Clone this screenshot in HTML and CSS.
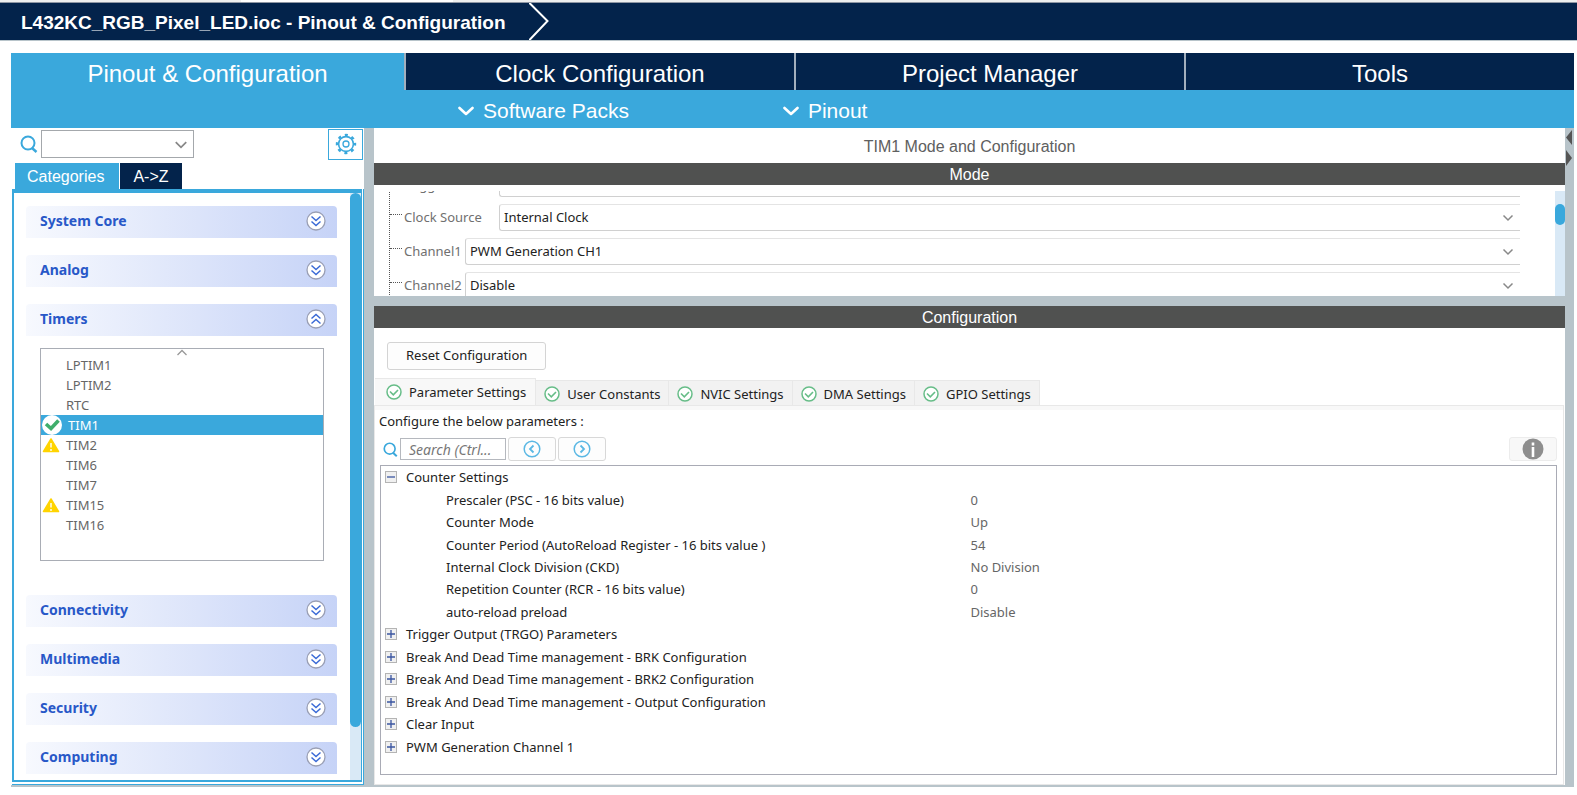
FILE: index.html
```html
<!DOCTYPE html>
<html lang="en">
<head>
<meta charset="utf-8">
<title>L432KC_RGB_Pixel_LED.ioc - Pinout &amp; Configuration</title>
<link rel="stylesheet" href="styles.css">
</head>
<body>
<svg class="defs" aria-hidden="true">
  <symbol id="chev" viewBox="0 0 12 8"><path d="M1.5 1.5 6 6l4.500-4.500" fill="none" stroke="currentColor" stroke-width="1.500"/></symbol>
  <symbol id="menu" viewBox="0 0 16 10"><path d="M1.500 2 8 8l6.500-6" fill="none" stroke="#fff" stroke-width="2.600" stroke-linecap="round" stroke-linejoin="round"/></symbol>
  <symbol id="search" viewBox="0 0 18 18"><circle cx="8" cy="8" r="6.500" fill="none" stroke="#3aa8dc" stroke-width="2"/><path d="M12 13l4.500 4" fill="none" stroke="#3aa8dc" stroke-width="2.500"/></symbol>
  <symbol id="down" viewBox="0 0 20 20"><circle cx="10" cy="10" r="9" fill="#fff" stroke="#9a9fb4" stroke-width="1.300"/><path d="M5.500 5.500 10 9.500l4.500-4M5.500 10.500 10 14.500l4.500-4" fill="none" stroke="#3a6ad6" stroke-width="1.500"/></symbol>
  <symbol id="up" viewBox="0 0 20 20"><circle cx="10" cy="10" r="9" fill="#fff" stroke="#9a9fb4" stroke-width="1.300"/><path d="M5.500 9.500 10 5.500l4.500 4M5.500 14.500 10 10.500l4.500 4" fill="none" stroke="#3a6ad6" stroke-width="1.500"/></symbol>
  <symbol id="ok" viewBox="0 0 16 16"><circle cx="8" cy="8" r="7" fill="#fff" stroke="#67bd88" stroke-width="1.500"/><path d="M4 7.500 7.300 10.800 12 6" fill="none" stroke="#67bd88" stroke-width="1.600"/></symbol>
  <symbol id="warn" viewBox="0 0 18 16"><path d="M9 2 16.500 14.500h-15z" fill="#ffd400" stroke="#ffd400" stroke-width="1.500" stroke-linejoin="round"/><path d="M9 6v4.500M9 12v2" stroke="#fff" stroke-width="1.400"/></symbol>
  <symbol id="plus" viewBox="0 0 12 12"><rect x=".5" y=".5" width="11" height="11" fill="#f0f0f0" stroke="#b4b4b4"/><path d="M2 6h8M6 2v8" stroke="#3a55a0" stroke-width="1.300"/></symbol>
  <symbol id="minus" viewBox="0 0 12 12"><rect x=".5" y=".5" width="11" height="11" fill="#f0f0f0" stroke="#b4b4b4"/><path d="M2 6h8" stroke="#3a55a0" stroke-width="1.300"/></symbol>
</svg>

<div class="strip"></div>
<header class="crumb">
  <h1>L432KC_RGB_Pixel_LED.ioc - Pinout &amp; Configuration</h1>
  <svg class="crumb-arrow" viewBox="0 0 20 37"><path d="M0-.5 18.500 18 0 37.500" fill="none" stroke="#fff" stroke-width="2"/></svg>
</header>

<div class="app">
  <nav class="tabs">
    <button class="tab active">Pinout &amp; Configuration</button>
    <button class="tab">Clock Configuration</button>
    <button class="tab">Project Manager</button>
    <button class="tab">Tools</button>
  </nav>
  <div class="menus">
    <button class="menu"><svg width="16" height="10"><use href="#menu"/></svg>Software Packs</button>
    <button class="menu"><svg width="16" height="10"><use href="#menu"/></svg>Pinout</button>
  </div>

  <div class="work">
    <aside class="side">
      <div class="find">
        <svg width="18" height="18"><use href="#search"/></svg>
        <span class="combo"><select aria-label="Search peripherals"><option></option></select><svg width="14" height="10"><use href="#chev"/></svg></span>
        <button class="gear" aria-label="Settings"><svg width="22" height="22" viewBox="0 0 22 22" fill="none" stroke="#3aa8dc"><circle cx="11" cy="11" r="9" stroke-width="2.400" stroke-dasharray="3.070 4" stroke-dashoffset="1.500"/><circle cx="11" cy="11" r="7.400" stroke-width="1.600"/><circle cx="11" cy="11" r="3" stroke-width="1.300"/></svg></button>
      </div>
      <div class="side-tabs">
        <button class="side-tab active">Categories</button>
        <button class="side-tab">A-&gt;Z</button>
      </div>
      <div class="frame">
        <div class="panel">
          <div class="cats">
            <button class="cat">System Core<svg width="20" height="20"><use href="#down"/></svg></button>
            <button class="cat">Analog<svg width="20" height="20"><use href="#down"/></svg></button>
            <button class="cat">Timers<svg width="20" height="20"><use href="#up"/></svg></button>
            <div class="list">
              <svg class="list-up" width="12" height="8" viewBox="0 0 12 8"><path d="M1.500 6 6 1.500 10.500 6" fill="none" stroke="#999" stroke-width="1.300"/></svg>
              <ul>
                <li><button><i></i>LPTIM1</button></li>
                <li><button><i></i>LPTIM2</button></li>
                <li><button><i></i>RTC</button></li>
                <li><button class="sel"><i><svg width="22" height="20" viewBox="0 0 22 20"><circle cx="11" cy="10" r="10" fill="#fff"/><path d="M5 9 10 13.500 17.500 5.500" fill="none" stroke="#3fae6b" stroke-width="3.600"/></svg></i>TIM1</button></li>
                <li><button><i><svg width="18" height="16"><use href="#warn"/></svg></i>TIM2</button></li>
                <li><button><i></i>TIM6</button></li>
                <li><button><i></i>TIM7</button></li>
                <li><button><i><svg width="18" height="16"><use href="#warn"/></svg></i>TIM15</button></li>
                <li><button><i></i>TIM16</button></li>
              </ul>
            </div>
            <button class="cat">Connectivity<svg width="20" height="20"><use href="#down"/></svg></button>
            <button class="cat">Multimedia<svg width="20" height="20"><use href="#down"/></svg></button>
            <button class="cat">Security<svg width="20" height="20"><use href="#down"/></svg></button>
            <button class="cat">Computing<svg width="20" height="20"><use href="#down"/></svg></button>
          </div>
          <div class="scroll"><div class="thumb"></div></div>
        </div>
      </div>
    </aside>

    <main class="main">
      <h2 class="title">TIM1 Mode and Configuration</h2>
      <h3 class="bar">Mode</h3>
      <section class="mode">
        <div class="fields">
          <div class="field"><label class="wide" for="trg">Trigger Source</label><span class="combo"><select id="trg"><option>Disable</option></select><svg width="12" height="8"><use href="#chev"/></svg></span></div>
          <div class="field"><label class="wide" for="clk">Clock Source</label><span class="combo"><select id="clk"><option>Internal Clock</option></select><svg width="12" height="8"><use href="#chev"/></svg></span></div>
          <div class="field"><label for="ch1">Channel1</label><span class="combo"><select id="ch1"><option>PWM Generation CH1</option></select><svg width="12" height="8"><use href="#chev"/></svg></span></div>
          <div class="field"><label for="ch2">Channel2</label><span class="combo"><select id="ch2"><option>Disable</option></select><svg width="12" height="8"><use href="#chev"/></svg></span></div>
        </div>
        <div class="scroll"><div class="thumb"></div></div>
      </section>
      <h3 class="bar split">Configuration</h3>
      <section class="config">
        <button class="reset">Reset Configuration</button>
        <div class="ptabs">
          <button class="ptab active"><svg width="16" height="16"><use href="#ok"/></svg>Parameter Settings</button>
          <button class="ptab"><svg width="16" height="16"><use href="#ok"/></svg>User Constants</button>
          <button class="ptab"><svg width="16" height="16"><use href="#ok"/></svg>NVIC Settings</button>
          <button class="ptab"><svg width="16" height="16"><use href="#ok"/></svg>DMA Settings</button>
          <button class="ptab"><svg width="16" height="16"><use href="#ok"/></svg>GPIO Settings</button>
        </div>
        <div class="pbody">
          <p class="hint">Configure the below parameters :</p>
          <div class="tools">
            <svg width="15" height="15"><use href="#search"/></svg>
            <input type="text" placeholder="Search (Ctrl..." aria-label="Search parameters">
            <button aria-label="Previous"><svg width="18" height="18" viewBox="0 0 18 18" fill="none" stroke="#5bb8e4" stroke-width="1.500"><circle cx="9" cy="9" r="7.800"/><path d="M10.500 5.500 7 9l3.500 3.500" stroke-width="1.800"/></svg></button>
            <button aria-label="Next"><svg width="18" height="18" viewBox="0 0 18 18" fill="none" stroke="#5bb8e4" stroke-width="1.500"><circle cx="9" cy="9" r="7.800"/><path d="M7.500 5.500 11 9l-3.500 3.500" stroke-width="1.800"/></svg></button>
            <button class="info" aria-label="Information"><svg width="22" height="22" viewBox="0 0 22 22"><circle cx="11" cy="11" r="10.500" fill="#8e8e8e"/><path d="M11 9v10M11 4.500v3" stroke="#fff" stroke-width="2.600"/></svg></button>
          </div>
          <div class="tree">
            <table>
              <tbody>
                <tr><th><button aria-label="Collapse"><svg width="12" height="12"><use href="#minus"/></svg></button>Counter Settings</th><td></td></tr>
                <tr><th class="sub">Prescaler (PSC - 16 bits value)</th><td>0</td></tr>
                <tr><th class="sub">Counter Mode</th><td>Up</td></tr>
                <tr><th class="sub">Counter Period (AutoReload Register - 16 bits value )</th><td>54</td></tr>
                <tr><th class="sub">Internal Clock Division (CKD)</th><td>No Division</td></tr>
                <tr><th class="sub">Repetition Counter (RCR - 16 bits value)</th><td>0</td></tr>
                <tr><th class="sub">auto-reload preload</th><td>Disable</td></tr>
                <tr><th><button aria-label="Expand"><svg width="12" height="12"><use href="#plus"/></svg></button>Trigger Output (TRGO) Parameters</th><td></td></tr>
                <tr><th><button aria-label="Expand"><svg width="12" height="12"><use href="#plus"/></svg></button>Break And Dead Time management - BRK Configuration</th><td></td></tr>
                <tr><th><button aria-label="Expand"><svg width="12" height="12"><use href="#plus"/></svg></button>Break And Dead Time management - BRK2 Configuration</th><td></td></tr>
                <tr><th><button aria-label="Expand"><svg width="12" height="12"><use href="#plus"/></svg></button>Break And Dead Time management - Output Configuration</th><td></td></tr>
                <tr><th><button aria-label="Expand"><svg width="12" height="12"><use href="#plus"/></svg></button>Clear Input</th><td></td></tr>
                <tr><th><button aria-label="Expand"><svg width="12" height="12"><use href="#plus"/></svg></button>PWM Generation Channel 1</th><td></td></tr>
              </tbody>
            </table>
          </div>
        </div>
      </section>
    </main>
    <div class="edge"><svg width="8" height="40" viewBox="0 0 8 40"><path d="M7 2v15L1 9.500zM1 22v16l6-8z" fill="#555"/></svg></div>
  </div>
</div>
</body>
</html>
```
FILE: styles.css
```css
:root {
  --navy: #03234b;
  --sky: #3aa8dc;
  --steel: #b8c4ca;
  --track: #d9e9f6;
}
* { box-sizing: border-box; }
body {
  margin: 0;
  min-height: 100vh;
  display: flex;
  flex-direction: column;
  background: #fff;
  color: #222;
  font: 13px/20px "Noto Sans", sans-serif;
}
button, select, input { font: inherit; color: inherit; margin: 0; border-radius: 0; }
button { border: 0; padding: 0; background: none; white-space: nowrap; }
svg { flex: none; display: block; }
.defs { position: absolute; width: 0; height: 0; }
h1, h2, h3, p, ul { margin: 0; padding: 0; font-weight: normal; }

.strip {
  height: 3px;
  border-bottom: 1px solid #8e96a3;
  background: linear-gradient(90deg, #eee 241px, #fff 241px, #fff 453px, #eee 453px);
}
.crumb {
  display: flex;
  align-items: center;
  gap: 23px;
  height: 38px;
  padding-left: 21px;
  background: var(--navy);
  border-bottom: 1px solid var(--steel);
  color: #fff;
}
.crumb h1 { padding-top: 2px; font: bold 19px/36px "Liberation Sans", sans-serif; }
.crumb-arrow { width: 20px; height: 37px; }

.app {
  flex: 1;
  display: flex;
  flex-direction: column;
  padding: 12px 3px 8px 11px;
}
.tabs { display: flex; gap: 2px; height: 37px; background: #a3afbd; }
.tab {
  flex: 1 1 0;
  padding-top: 2px;
  background: var(--navy);
  color: #fff;
  font: 24px/37px "Liberation Sans", sans-serif;
}
.tab.active { flex-basis: 5px; background: var(--sky); }
.menus {
  display: flex;
  gap: 154px;
  height: 38px;
  padding-left: 447px;
  background: var(--sky);
}
.menu {
  display: flex;
  align-items: center;
  gap: 9px;
  padding-top: 3px;
  color: #fff;
  font: 21px/36px "Liberation Sans", sans-serif;
}
.work { flex: 1; display: flex; border-bottom: 2px solid var(--steel); }

.side { flex: none; width: 353px; display: flex; flex-direction: column; }
.find { display: flex; align-items: center; height: 32px; padding-left: 9px; }
.combo { position: relative; display: block; }
.combo select {
  display: block;
  width: 100%;
  height: 100%;
  appearance: none;
  background: #fff;
  border: 1px solid #d0d0d0;
  padding: 0 4px 2px;
}
.combo svg {
  position: absolute;
  right: 6px;
  top: 50%;
  margin-top: -4px;
  color: #888;
}
.find .combo { width: 153px; height: 28px; margin-left: 3px; }
.find .combo select { border-color: #a4a8ac; }
.gear {
  display: grid;
  place-items: center;
  width: 35px;
  height: 31px;
  margin: 0 1px 0 auto;
  border: 1px solid var(--sky);
}
.side-tabs { display: flex; gap: 1px; padding: 3px 0 0 4px; }
.side-tab {
  height: 26px;
  padding: 0 13px;
  background: var(--navy);
  color: #fff;
  font: 16px/25px "Liberation Sans", sans-serif;
}
.side-tab.active { padding: 0 15px 0 12px; background: var(--sky); }
.frame {
  flex: 1;
  display: flex;
  margin-left: 1px;
  border: solid var(--sky);
  border-width: 0 1px 1px 0;
  padding: 0 1px 2px 0;
}
.panel { flex: 1; display: flex; border: 2px solid var(--sky); border-top-width: 4px; border-right-width: 1px; }
.cats { flex: 1; padding: 13px 13px 5px 12px; display: flex; flex-direction: column; }
.cat {
  display: flex;
  align-items: center;
  justify-content: space-between;
  height: 32px;
  margin-bottom: 17px;
  padding: 0 11px 2px 14px;
  border-radius: 4px 4px 0 0;
  background: linear-gradient(90deg, #f7f9fe, #c6d3f7);
  color: #2858c8;
  font-weight: bold;
  font-size: 14px;
}
.cat:last-child { margin-bottom: 0; }
.list {
  height: 213px;
  margin: -5px 13px 34px 14px;
  border: 1px solid #a9adb5;
  color: #666;
}
.list-up { margin: 0 auto -2px; }
.list ul { list-style: none; }
.list li button {
  display: flex;
  align-items: center;
  gap: 5px;
  width: 100%;
  height: 20px;
}
.list i { display: grid; place-items: center; width: 20px; height: 20px; }
.list .sel { background: var(--sky); color: #fff; gap: 7px; }
.scroll { flex: none; background: var(--track); }
.thumb { background: var(--sky); border-radius: 6px; }
.panel .scroll { width: 11px; }
.panel .thumb { height: 91%; }

.main {
  flex: 1;
  min-width: 0;
  display: flex;
  flex-direction: column;
  border-left: 10px solid var(--steel);
}
.title {
  height: 35px;
  color: #606060;
  text-align: center;
  font: 16px/38px "Liberation Sans", sans-serif;
}
.bar {
  height: 22px;
  background: #505150;
  color: #fff;
  text-align: center;
  font: 16px/24px "Liberation Sans", sans-serif;
}
.bar.split { box-sizing: content-box; border-top: 10px solid var(--steel); }
.mode { display: flex; height: 105px; margin-top: 6px; overflow: hidden; }
.fields {
  flex: 1;
  display: flex;
  flex-direction: column;
  gap: 7px;
  align-self: flex-start;
  margin: -21px 35px 0 15px;
  border-left: 1px dotted #555;
}
.field { display: flex; height: 27px; }
.field::before {
  content: "";
  width: 12px;
  height: 10px;
  margin-right: 2px;
  border-bottom: 1px dotted #555;
}
.field label { width: 61px; line-height: 27px; color: #707070; }
.field .wide { width: 95px; }
.field:first-child label { line-height: 30px; }
.field .combo { flex: 1; }
.field select { border-right: 0; border-top-color: #e4e4e4; border-radius: 3px 0 0 3px; }
.mode .scroll { width: 10px; padding-top: 13px; }
.mode .thumb { height: 21px; }

.config { flex: 1; display: flex; flex-direction: column; padding: 14px 1px 0 0; }
.reset {
  align-self: flex-start;
  height: 28px;
  margin-left: 13px;
  padding: 0 18px 2px;
  border: 1px solid #d4d4d4;
  border-radius: 3px;
  background: #fdfdfd;
}
.ptabs { display: flex; align-items: flex-end; height: 36px; margin: 0 0 -1px 1px; }
.ptab {
  display: flex;
  align-items: center;
  gap: 7px;
  height: 26px;
  padding: 2px 8px 0;
  border: 1px solid #e8e8e8;
  border-left: 0;
  background: #f2f2f2;
}
.ptab.active {
  height: 28px;
  padding: 0 9px 2px 11px;
  border-bottom: 0;
  background: #f8f8f8;
}
.pbody {
  flex: 1;
  display: flex;
  flex-direction: column;
  padding: 5px 6px 9px 4px;
  border: 1px solid #e8e8e8;
  box-shadow: inset 0 4px #f8f8f8;
}
.hint { line-height: 20px; }
.tools { display: flex; align-items: center; gap: 2px; height: 24px; margin: 6px 0 4px 4px; }
.tools input {
  width: 106px;
  height: 22px;
  padding: 0 8px;
  border: 1px solid #b5b8be;
  font-size: 14px;
  font-style: italic;
}
.tools input::placeholder { color: #777; opacity: 1; }
.tools button {
  display: grid;
  place-items: center;
  width: 48px;
  height: 24px;
  border: 1px solid #d8d8d8;
  border-radius: 3px;
  background: #fdfdfd;
}
.tools .info { margin-left: auto; border-color: #ececec; background: #f8f8f8; }
.tree { flex: 1; margin-left: 1px; border: 1px solid #a9abb5; }
.tree table { width: 100%; height: 292px; border-collapse: collapse; table-layout: fixed; }
.tree th, .tree td { padding: 0; text-align: left; font-weight: normal; white-space: nowrap; line-height: 20px; }
.tree th { width: 50%; padding-left: 4px; }
.tree .sub { padding-left: 65px; }
.tree td { color: #666; padding-left: 2px; }
.tree button { display: inline-block; vertical-align: -1px; margin-right: 9px; }
.edge { width: 9px; background: var(--steel); }
```
